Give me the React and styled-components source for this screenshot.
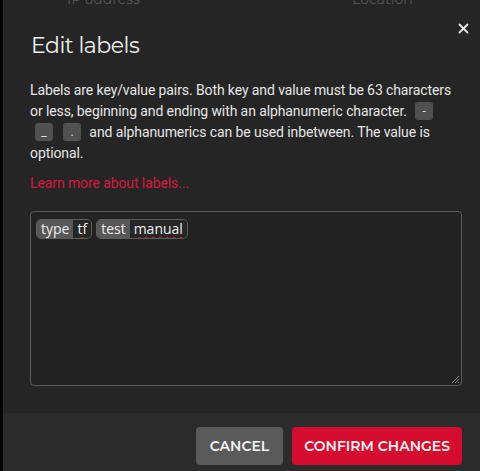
import React from "react";
import styled, { createGlobalStyle } from "styled-components";

const Global = createGlobalStyle`
  html, body { margin: 0; padding: 0; background: #000; overflow: hidden; }
  body { font-family: Roboto, "Liberation Sans", sans-serif; }
`;

const Backdrop = styled.div`
  width: 480px;
  height: 471px;
  background: #050505;
  overflow: hidden;
`;

const BgHeader = styled.div`
  display: flex;
  padding-left: 67px;
  color: #555;
  font-family: Montserrat, "Open Sans", sans-serif;
  font-size: 14px;
  line-height: 1;
  white-space: nowrap;
  margin-top: -8px;
  height: 11px;
`;

const BgCol = styled.span`
  width: ${p => p.$w}px;
  flex: none;
`;

const Modal = styled.div`
  margin: -8px 0 0 3px;
  width: 520px;
  background: #252525;
  border-radius: 6px;
  box-shadow: 0 0 8px rgba(0,0,0,0.6);
`;

const Header = styled.div`
  position: relative;
  padding: 37px 28px 0 28px;
`;

const Title = styled.h2`
  margin: 0;
  font-family: Montserrat, "Open Sans", sans-serif;
  font-weight: 400;
  font-size: 22px;
  letter-spacing: -0.5px;
  line-height: 28px;
  color: #f0f0f0;
`;

const Close = styled.button`
  position: absolute;
  top: 27px;
  right: 53px;
  background: none;
  border: none;
  padding: 0;
  width: 14px;
  height: 14px;
  color: #e8e8e8;
  cursor: pointer;
`;

const Body = styled.div`
  padding: 20px 61px 27px 27px;
`;

const Para = styled.p`
  margin: 0;
  font-size: 14px;
  letter-spacing: -0.1px;
  line-height: 21px;
  color: #e6e6e6;
`;

const Code = styled.code`
  display: inline-block;
  min-width: 18px;
  height: 18px;
  line-height: 18px;
  text-align: center;
  background: #505050;
  border-radius: 3px;
  color: #e0e0e0;
  font-family: Roboto, sans-serif;
  font-size: 12px;
  margin: 0 5px;
  vertical-align: 1px;
`;

const Link = styled.a`
  display: block;
  margin-top: 11px;
  color: #d8173e;
  font-size: 14px;
  letter-spacing: -0.1px;
  text-decoration: none;
`;

const TextBox = styled.div`
  margin-top: 20px;
  height: 175px;
  border: 1px solid #5a5a5a;
  border-radius: 4px;
  background: #222;
  padding: 7px 5px;
  box-sizing: border-box;
  position: relative;
  display: flex;
  gap: 4px;
  align-items: flex-start;
`;

const Chip = styled.span`
  display: inline-flex;
  border: 1px solid #5e5e5e;
  border-radius: 5px;
  overflow: hidden;
  font-size: 14px;
  line-height: 18px;
  font-family: "Open Sans", sans-serif;
`;

const ChipKey = styled.span`
  background: #585858;
  color: #ededed;
  padding: 0 4px;
`;

const ChipVal = styled.span`
  background: #262626;
  color: #f0f0f0;
  padding: 0 4px;
  text-decoration: underline wavy #d21a2a;
  text-decoration-thickness: 1px;
  text-underline-offset: 2px;
`;

const Grip = styled.svg`
  position: absolute;
  right: 1px;
  bottom: 1px;
`;

const Footer = styled.div`
  background: #2b2b2b;
  display: flex;
  gap: 9px;
  padding: 14px 61px 20px 0;
  justify-content: flex-end;
`;

const Button = styled.button`
  height: 38px;
  border: none;
  border-radius: 4px;
  padding: 0 ${p => p.$wide ? 12 : 14}px;
  background: ${p => p.$primary ? "#d50c2d" : "#5a5a5a"};
  color: #f5f5f5;
  font-family: Montserrat, "Open Sans", sans-serif;
  font-weight: 600;
  font-size: 14px;
`;

export default function App() {
  return (
    <Backdrop>
      <Global />
      <BgHeader><BgCol $w={285}>IP address</BgCol><BgCol $w={100}>Location</BgCol></BgHeader>
      <Modal>
        <Header>
          <Title>Edit labels</Title>
          <Close aria-label="close">
            <svg width="11" height="11" viewBox="0 0 11 11">
              <path d="M1.5 1.5 L9.5 9.5 M9.5 1.5 L1.5 9.5" stroke="currentColor" strokeWidth="1.8" strokeLinecap="round" />
            </svg>
          </Close>
        </Header>
        <Body>
          <Para>
            Labels are key/value pairs. Both key and value must be 63 characters or less, beginning and ending with an alphanumeric character. <Code>-</Code><Code>_</Code><Code>.</Code> and alphanumerics can be used inbetween. The value is optional.
          </Para>
          <Link href="#">Learn more about labels...</Link>
          <TextBox>
            <Chip><ChipKey>type</ChipKey><ChipVal>tf</ChipVal></Chip>
            <Chip><ChipKey>test</ChipKey><ChipVal>manual</ChipVal></Chip>
            <Grip width="10" height="10" viewBox="0 0 10 10">
              <path d="M9 2 L2 9 M9 5 L5 9 M9 8 L8 9" stroke="#888" strokeWidth="1" />
            </Grip>
          </TextBox>
        </Body>
        <Footer>
          <Button>CANCEL</Button>
          <Button $primary $wide>CONFIRM CHANGES</Button>
        </Footer>
      </Modal>
    </Backdrop>
  );
}
